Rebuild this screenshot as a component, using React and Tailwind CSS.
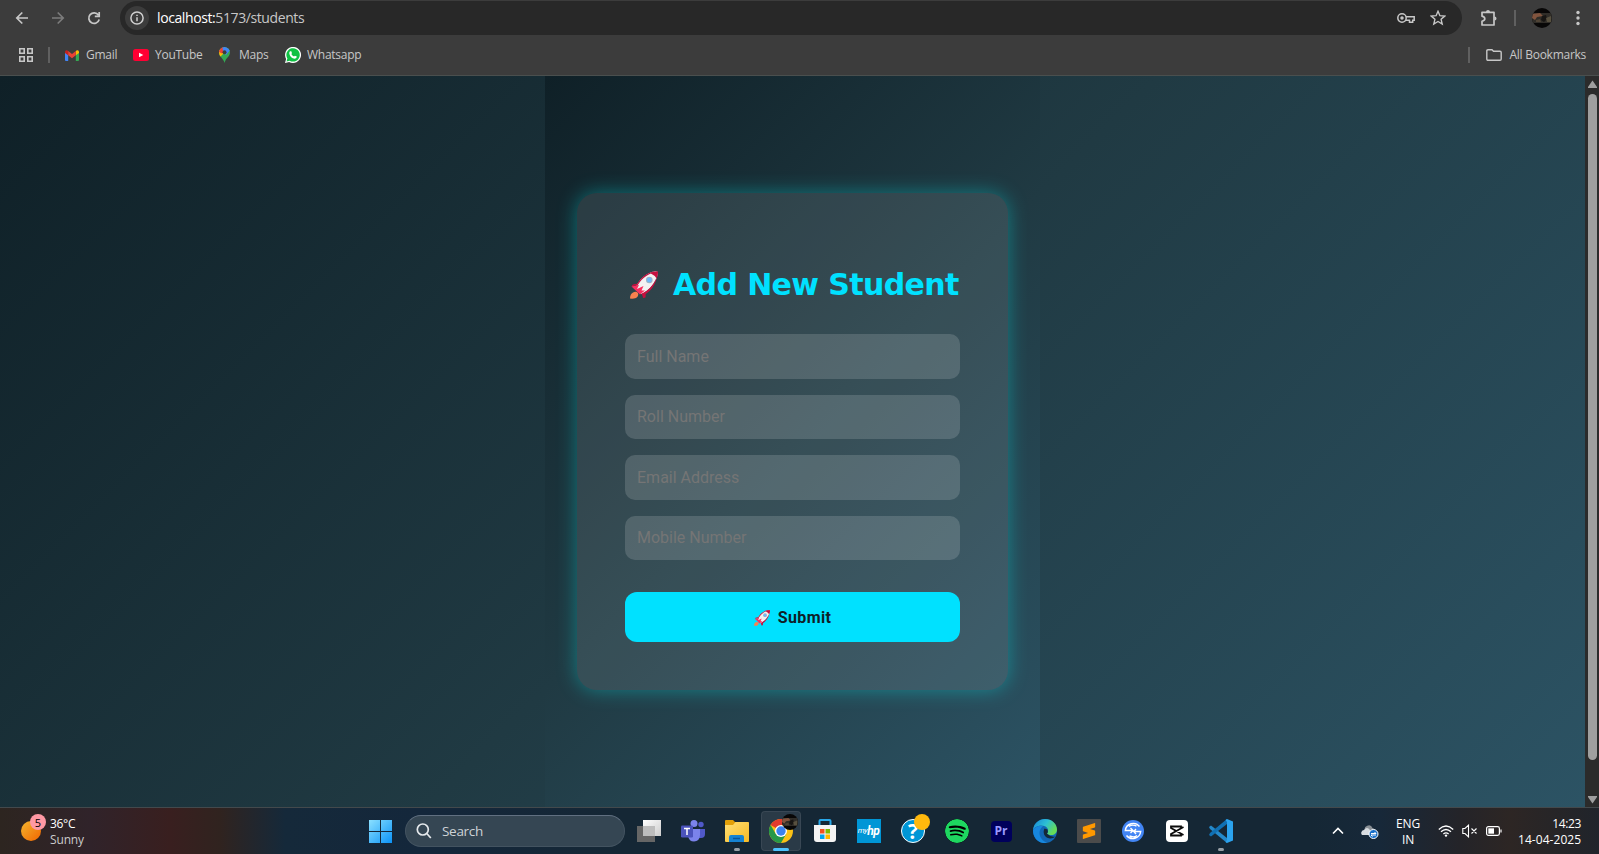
import React from "react";
import { SiSpotify, SiSublimetext } from "react-icons/si";

const BG = "bg-[linear-gradient(135deg,#0f2027,#203a43,#2c5364)]";

function Rocket({ className }) {
  return (
    <svg viewBox="0 0 28 28" className={className}>
      <path d="M3 21.500Q6 20 8 22Q9 25 6 27Q3 28 0 27.500Q0 23 3 21.500Z" fill="#f9814f" />
      <path d="M7 14L1.500 15.500Q2 13 5 13Q9 12 13 14L15 20Q16 24 15.500 26.500L13 27L12 22Z" fill="#c5103f" />
      <path d="M5 18C8 9 17 1 26 .3Q28 .2 27.800 2C27 11 19 20 11 23Z" fill="#f3f1f2" />
      <path d="M5 17.500C8 9 16 1.500 24 .5L24 1.500C17 3 10 9 6.500 16.500Z" fill="#c5103f" />
      <path d="M20.500 2.300Q23.500 .3 27 .2Q28.300 .4 28 2Q27.800 5 26.600 7.600Q25 4.500 20.500 2.300Z" fill="#c5103f" />
      <path d="M26.600 6.500C23 15 18 19.500 11.500 23L13 25C21 20 25.500 14 26.600 6.500Z" fill="#c5103f" />
      <path d="M1.500 15.500L9 14L7 18L13.500 15L11.500 19.500L15 19.500L10 23.500Z" fill="#f92f60" />
      <circle cx="19.300" cy="9" r="3.300" fill="#9ab4c8" />
      <circle cx="19.300" cy="9" r="2.200" fill="#6cb9fb" />
    </svg>
  );
}

function Gmail() {
  return (
    <svg viewBox="0 0 14 11" className="h-[11px] w-[14px]">
      <path d="M0 2V10Q0 11 1 11H3.200V4.500Z" fill="#4285f4" />
      <path d="M14 2V10Q14 11 13 11H10.800V4.500Z" fill="#34a853" />
      <path d="M0 2Q0 0 2 .3L3.200 1V5.300L0 3Z" fill="#c5221f" />
      <path d="M14 2Q14 0 12 .3L10.800 1V5.300L14 3Z" fill="#fbbc04" />
      <path d="M3.200 1L7 3.900L10.800 1V5.300L7 8.200L3.200 5.300Z" fill="#ea4335" />
    </svg>
  );
}

function MapsPin() {
  return (
    <svg viewBox="0 0 11 16" className="h-4 w-[11px]">
      <path d="M0 5.500A5.500 5.500 0 0 1 11 5.500C11 9.500 7 10.500 5.500 16C4.500 11 0 10 0 5.500Z" fill="#34a853" />
      <path d="M1.300 2L5.500 5.500L1.500 9.500Q0 7.500 0 5.500Q0 3.500 1.300 2Z" fill="#fbbc04" />
      <path d="M1.300 2Q2 .9 3.800 .3L6 3L3 6.500L0 5Q.2 3.200 1.300 2Z" fill="#ea4335" />
      <path d="M3.500 .4Q5.500 -.4 7.500 .4Q9.800 1.400 10.700 3.700L7 8L4 4Z" fill="#4285f4" />
      <circle cx="5.500" cy="5.300" r="2" fill="#3c3c3c" />
    </svg>
  );
}

function Bookmark({ icon, label, className = "" }) {
  return (
    <div className={"flex items-center text-[12px] tracking-[-0.270px] text-[#c7c7c7] " + className}>
      {icon}
      <span className="whitespace-nowrap">{label}</span>
    </div>
  );
}

function Avatar({ className }) {
  return (
    <svg viewBox="0 0 20 20" className={className}>
      <defs><clipPath id="face"><circle cx="10" cy="10" r="10" /></clipPath></defs>
      <g clipPath="url(#face)">
        <path d="M0 0H20V20H0Z" fill="#080707" />
        <path d="M0 5H20V15H0Z" fill="#302d28" />
        <path d="M0 6L8 5L11 8L5 9L3 12L0 10Z" fill="#81543e" />
        <path d="M10 8L14 7L15 11L12 14L9 12Z" fill="#171513" />
        <path d="M14 10L19 8V14H15Z" fill="#57503f" />
        <path d="M4 12L8 11L9 14H4Z" fill="#4f4335" />
      </g>
    </svg>
  );
}

function BrowserBar() {
  return (
    <header className="h-[76px] border-b border-[#4a4f4e] bg-[#3c3c3c]">
      <div className="flex h-9 items-center">
        <svg viewBox="0 0 120 36" className="h-9 w-[120px]" fill="none" stroke="#c7c7c7" strokeWidth="1.700">
          <path d="M28 18H17M22.300 12.500L16.800 18L22.300 23.500" />
          <path d="M52 18H63M57.700 12.500L63.200 18L57.700 23.500" stroke="#7c7c7c" />
          <path d="M98.400 15A5.300 5.300 0 1 0 99.200 19.500M99.200 12V16.400H94.800" />
        </svg>
        <div className="mb-[1px] flex h-[34px] w-[1342px] items-center rounded-full bg-[#282828] pl-[5px] pr-4">
          <div className="flex size-6 items-center justify-center rounded-full bg-[#3c3c3c]">
            <svg viewBox="0 0 14 14" className="size-[14px]" fill="none" stroke="#d0d0d0" strokeWidth="1.500">
              <circle cx="7" cy="7" r="6.100" /><path d="M7 6.200V10.200M7 3.700V5.100" />
            </svg>
          </div>
          <span className="ml-2 text-[14px] tracking-[-0.400px] text-[#c7c7c7]"><span className="text-white">localhost:</span>5173/students</span>
          <svg viewBox="0 0 18 12" className="ml-auto h-3 w-[18px]" fill="none" stroke="#c7c7c7" strokeWidth="1.500">
            <circle cx="5" cy="6" r="4.200" /><circle cx="5" cy="6" r="1" fill="#c7c7c7" />
            <path d="M9 4.700H17.200V8.200H15.700V10.200H12.500V8.200H9" />
          </svg>
          <svg viewBox="0 0 16 16" className="ml-[15px] size-4" fill="none" stroke="#c7c7c7" strokeWidth="1.400">
            <path d="M8 1.300L9.900 5.700L14.700 6.100L11.100 9.300L12.200 14L8 11.500L3.800 14L4.900 9.300L1.300 6.100L6.100 5.700Z" />
          </svg>
        </div>
        <svg viewBox="0 0 18 18" className="mb-[1px] ml-[18px] size-[18px]" fill="none" stroke="#c7c7c7" strokeWidth="1.700">
          <path d="M2 3.300H14V16H2V12.200Q4.800 11.500 4.800 9.700Q4.800 7.800 2 7.200Z" strokeLinejoin="round" />
          <path d="M6 3A2 2 0 0 1 10 3ZM14.500 7.500A2 2 0 0 1 14.500 11.500Z" fill="#c7c7c7" stroke="none" />
        </svg>
        <div className="ml-[15.500px] h-4 w-[2px] bg-[#606060]" />
        <Avatar className="ml-[16px] size-5" />
        <svg viewBox="0 0 4 16" className="ml-[24px] h-4 w-1" fill="#c7c7c7">
          <circle cx="2" cy="2.500" r="1.700" /><circle cx="2" cy="8" r="1.700" /><circle cx="2" cy="13.500" r="1.700" />
        </svg>
      </div>
      <div className="flex h-[38px] items-center pl-[19px] pr-[13px]">
        <svg viewBox="0 0 14 14" className="size-[14px]" fill="none" stroke="#c7c7c7" strokeWidth="1.600">
          <path d="M.8 .8H5.200V5.200H.8ZM8.800 .8H13.200V5.200H8.800ZM.8 8.800H5.200V13.200H.8ZM8.800 8.800H13.200V13.200H8.800Z" />
        </svg>
        <div className="ml-[15px] h-4 w-[2px] bg-[#606060]" />
        <Bookmark className="ml-[15px] w-[68px] gap-[7px]" icon={<Gmail />} label="Gmail" />
        <Bookmark className="w-[86px] gap-[6px]" label="YouTube" icon={
          <svg viewBox="0 0 16 12" className="h-3 w-4"><rect width="16" height="12" rx="2.500" fill="#ff0033" /><path d="M6 3.700V8.300L10.300 6Z" fill="#fff" /></svg>
        } />
        <Bookmark className="w-[66px] gap-[9px]" icon={<MapsPin />} label="Maps" />
        <Bookmark className="gap-[6px]" label="Whatsapp" icon={
          <svg viewBox="0 0 16 16" className="size-4"><path d="M0 16L1.100 11.900A8 8 0 1 1 4.100 14.900Z" fill="#fff" /><path d="M1.500 14.500L2.400 11.500A6.700 6.700 0 1 1 4.700 13.700Z" fill="#0fc143" /><path d="M5 4.200H6.300L7 6.200L6.300 7.100Q7.200 8.800 9 9.500L9.900 8.700L11.800 9.600Q11.800 11.700 9.800 11.700Q5.400 11 4.300 6.700Q4.100 5 5 4.200Z" fill="#fff" /></svg>
        } />
        <div className="ml-auto h-4 w-[2px] bg-[#606060]" />
        <Bookmark className="ml-4 gap-2" label="All Bookmarks" icon={
          <svg viewBox="0 0 16 12" className="h-3 w-4" fill="none" stroke="#c7c7c7" strokeWidth="1.400"><path d="M2 .8H6L7.500 2.300H14Q15.200 2.300 15.200 3.500V10Q15.200 11.200 14 11.200H2Q.8 11.200 .8 10V2Q.8 .8 2 .8Z" /></svg>
        } />
      </div>
    </header>
  );
}

function StudentForm() {
  return (
    <main className={"flex flex-1 justify-center " + BG}>
      <section className={"flex w-[495px] items-center justify-center font-[Roboto,sans-serif] " + BG}>
        <form className="h-[497px] w-[431px] rounded-[20px] bg-[#ffffff1a] px-12 pt-[74px] shadow-[0_0_20px_#00ffff59]">
          <h2 className="flex h-9 items-center whitespace-nowrap pl-[5px]">
            <Rocket className="size-7 shrink-0" />
            <span className="ml-[15px] font-['DejaVu_Sans',sans-serif] text-[30px] font-bold leading-none tracking-[-0.620px] text-[#00e1ff]">Add New Student</span>
          </h2>
          <div className="mt-[31px] flex flex-col gap-4">
            {["Full Name", "Roll Number", "Email Address", "Mobile Number"].map((label) => (
              <input key={label} placeholder={label} className="h-[44.500px] w-full rounded-[10px] bg-[#ffffff26] px-3 text-[16px] placeholder:text-[#757575]" />
            ))}
          </div>
          <button type="button" className="mt-8 flex h-[50px] w-full items-center justify-center gap-2 rounded-xl bg-[#00e1ff] pt-[1px] text-[16px] font-bold tracking-[0.400px] text-[#0f2027]">
            <Rocket className="size-4" />
            Submit
          </button>
        </form>
      </section>
    </main>
  );
}

function Scrollbar() {
  return (
    <aside className="flex w-[14px] flex-col items-center bg-[#2b2b2b] pb-[3px] pt-1">
      <svg viewBox="0 0 9 8" className="h-2 w-[9px]" fill="#9f9f9f"><path d="M4.500 .5L9 7V8H0V7Z" /></svg>
      <div className="mb-auto mt-[6px] h-[666px] w-[9px] rounded-full bg-[#9f9f9f]" />
      <svg viewBox="0 0 9 8" className="h-2 w-[9px]" fill="#9f9f9f"><path d="M4.500 7.500L9 1V0H0V1Z" /></svg>
    </aside>
  );
}

function Teams() {
  return (
    <svg viewBox="0 0 24 22" className="h-[22px] w-6">
      <circle cx="20" cy="4.500" r="2.700" fill="#5059c9" /><path d="M17 9H24V14Q24 18 20 18H17Z" fill="#5059c9" />
      <circle cx="13" cy="3.600" r="3.500" fill="#7b83eb" /><path d="M7 9H19V15Q18.500 21.500 13 21.500Q8 21.500 7 16Z" fill="#7b83eb" />
      <rect y="5.500" width="12" height="12" rx="1.300" fill="#4b53bc" /><path d="M3 8.500H9M6 8.500V15" stroke="#fff" strokeWidth="1.500" />
    </svg>
  );
}

function Folder() {
  return (
    <svg viewBox="0 0 24 22" className="h-[22px] w-6">
      <defs><linearGradient id="folder" x2="1" y2="1"><stop stopColor="#ffdf75" /><stop offset="1" stopColor="#f9bb24" /></linearGradient></defs>
      <path d="M0 1Q0 0 1 0H8L10 2H22Q24 2 24 4V10H0Z" fill="#e3a008" />
      <path d="M0 5H8L10.500 2H23Q24 2 24 3V21Q24 22 23 22H1Q0 22 0 21Z" fill="url(#folder)" />
      <path d="M4 22V17Q4 15 6 15H17Q19 15 19 17V22Z" fill="#1683d3" /><path d="M8 18.500H15" stroke="#0a559b" strokeWidth="1.500" />
    </svg>
  );
}

function Chrome() {
  return (
    <svg viewBox="0 0 24 24" className="size-6">
      <circle cx="12" cy="12" r="12" fill="#fbc116" />
      <path d="M12 12L1.600 6A12 12 0 0 1 22.400 6H12Z" fill="#e33b2e" />
      <path d="M1.600 6A12 12 0 0 0 12 24L17.200 15L12 12L6.800 15Z" fill="#279847" />
      <circle cx="12" cy="12" r="6" fill="#fff" /><circle cx="12" cy="12" r="4.700" fill="#3b82f0" />
    </svg>
  );
}

function Store() {
  return (
    <svg viewBox="0 0 24 24" className="size-6">
      <path d="M6.500 7V2Q6.500 1 7.500 1H16.500Q17.500 1 17.500 2V7" fill="none" stroke="#28a8e9" strokeWidth="2" />
      <path d="M1 6H23V20Q23 23 20 23H4Q1 23 1 20Z" fill="#f4f4f4" />
      <path d="M7 10H11.500V14.500H7Z" fill="#f25022" /><path d="M12.500 10H17V14.500H12.500Z" fill="#7fba00" />
      <path d="M7 15.500H11.500V20H7Z" fill="#00a4ef" /><path d="M12.500 15.500H17V20H12.500Z" fill="#ffb900" />
    </svg>
  );
}

function Edge() {
  return (
    <svg viewBox="0 0 24 24" className="size-6">
      <defs><linearGradient id="wave" x2="1" y2=".5"><stop stopColor="#1683d8" /><stop offset=".55" stopColor="#2dc0d4" /><stop offset="1" stopColor="#66dc57" /></linearGradient></defs>
      <circle cx="12" cy="12" r="12" fill="#1267b4" />
      <path d="M0 11C1 4 6 0 12 0C19 0 24 5 24 10.500C24 14 21.500 16 18.500 16C16 16 14 15.300 14 14.500C15.500 13 16 9 12 7.200C7 5 1 8 0 11Z" fill="url(#wave)" />
      <path d="M0 11C2 8 6 6 10 7.500C7 9 5 14 8 19C10 22 13 24 15 23.600C6 26 0 19 0 11Z" fill="#1787de" />
      <path d="M11.500 9.500C9.500 13 11 19 17 19.500Q20 19.700 22.600 17.500Q18 18.500 14 14.700Q15.500 13 14.500 10.500Z" fill="#142838" />
    </svg>
  );
}

function Sync() {
  return (
    <svg viewBox="0 0 22 22" className="size-[22px]" fill="none" stroke="#fff" strokeWidth="1.400">
      <circle cx="11" cy="11" r="11" fill="#4285f4" stroke="none" />
      <path d="M17.500 6.500A8 8 0 0 0 3.300 10.500H10.500M8.500 8L11 10.500L8.500 13M4.500 15.500A8 8 0 0 0 18.700 11.500H12M14 9L11.800 11.500L14 14M7 6.500Q10 4 14.500 6M7.500 16Q12 18 15 15.500" />
    </svg>
  );
}

function CapCut() {
  return (
    <svg viewBox="0 0 22 22" className="size-[22px]" fill="none" stroke="#0b0b0b" strokeWidth="1.800">
      <rect width="22" height="22" rx="4" fill="#fff" stroke="none" />
      <path d="M17.500 7L5 14V15.500H15V14M17.500 15L5 8V6.500H15V8" />
    </svg>
  );
}

function VSCode() {
  return (
    <svg viewBox="0 0 24 24" className="size-6">
      <path d="M0 8L2 6.500L18 19V24L1 10Z" fill="#2489ca" />
      <path d="M0 16L2 17.500L18 5V0L1 14Z" fill="#1070b3" />
      <path d="M18 0L24 2.500V21.500L18 24L16.500 23L18 21V3L16.500 1Z" fill="#2ba3ee" />
    </svg>
  );
}

function MyHp() {
  return <div className="flex size-6 items-center justify-center bg-[#0096d6] pr-[1px] font-[Roboto,sans-serif] text-[8px] italic leading-none tracking-[-0.500px] text-white">my<span className="text-[12px] font-bold">hp</span></div>;
}

function Help() {
  return (
    <div className="relative flex size-6 items-center justify-center rounded-full border-[1.500px] border-white bg-[#0096d6] text-[21px] font-bold leading-none text-white">
      ?
      <span className="absolute -right-[6px] -top-[6px] size-4 rounded-full bg-[#ffb90d]" />
    </div>
  );
}

function TaskView() {
  return (
    <svg viewBox="0 0 24 22" className="h-[22px] w-6">
      <defs><linearGradient id="pane" x2="1" y2="1"><stop stopColor="#fff" /><stop offset="1" stopColor="#ccc" /></linearGradient></defs>
      <path d="M6 0H24V16H6Z" fill="url(#pane)" /><path d="M0 6H18V22H0Z" fill="#666" /><path d="M6 6H18V16H6Z" fill="#bdbdbd" />
    </svg>
  );
}

function Slot({ children, mark, active }) {
  return (
    <div className={"relative flex h-10 w-10 shrink-0 items-center justify-center rounded " + (active ? "bg-[#ffffff17] ring-1 ring-inset ring-[#ffffff12]" : "")}>
      {children}
      {mark && <span className={"absolute rounded-full " + (active ? "bottom-0 h-[3px] w-4 bg-[#4cc2ff]" : "bottom-0 h-[3px] w-[6px] bg-[#98a0a7]")} />}
    </div>
  );
}

function Taskbar() {
  return (
    <footer className="flex h-[47px] items-center border-t border-[#43494c] bg-[linear-gradient(90deg,#2d2520_0px,#30232a_90px,#391f1f_170px,#30231f_220px,#15293a_285px,#14273b_420px,#152735_620px,#152735_1310px,#172839_1380px,#242429_1460px,#2d2624_1510px,#20242b_1599px)] text-white">
      <div className="relative ml-[21px] h-5 w-5">
        <div className="size-5 rounded-full bg-[linear-gradient(135deg,#f3b62f,#f26500)]" />
        <span className="absolute -right-[5px] -top-[7px] flex size-4 items-center justify-center rounded-full bg-[#ff99a4] text-[11px] leading-none text-black">5</span>
      </div>
      <div className="ml-[9px] w-[307px] pt-[1px] text-[12px] leading-4">
        <div className="tracking-[-0.300px]">36°C</div>
        <div className="tracking-[-0.150px] text-[#cbcbcb]">Sunny</div>
      </div>
      <svg viewBox="0 0 23 23" className="ml-[11.500px] size-[23px]">
        <defs><linearGradient id="win" x2="1" y2="1"><stop stopColor="#8be0ff" /><stop offset="1" stopColor="#0b93f8" /></linearGradient></defs>
        <path d="M0 0H11V11H0ZM12 0H23V11H12ZM0 12H11V23H0ZM12 12H23V23H12Z" fill="url(#win)" />
      </svg>
      <div className="ml-[13.500px] flex h-8 w-[220px] items-center rounded-full border border-[#435360] border-t-[#617081] bg-[#354653] pl-[10px]">
        <svg viewBox="0 0 16 16" className="size-4" fill="none" stroke="#e5e9ec" strokeWidth="1.700"><circle cx="6.800" cy="6.500" r="5.500" /><path d="M10.800 10.500L14.800 15" /></svg>
        <span className="ml-[10px] text-[13.500px] tracking-[-0.300px] text-[#cdd2d6]">Search</span>
      </div>
      <div className="ml-1 flex gap-1">
        <Slot><TaskView /></Slot>
        <Slot><Teams /></Slot>
        <Slot mark><Folder /></Slot>
        <Slot mark active>
          <Chrome />
          <Avatar className="absolute right-[3px] top-[3px] size-4" />
        </Slot>
        <Slot><Store /></Slot>
        <Slot><MyHp /></Slot>
        <Slot><Help /></Slot>
        <Slot><SiSpotify className="size-6 rounded-full bg-black text-[#1ed760]" /></Slot>
        <Slot><div className="flex h-[21px] w-[21px] items-center justify-center rounded bg-[#00005b] text-[12px] font-bold leading-none text-[#9999ff]">Pr</div></Slot>
        <Slot><Edge /></Slot>
        <Slot><div className="flex size-6 items-center justify-center rounded-[1px] bg-[#4b4b4b]"><SiSublimetext className="size-4 text-[#ff9800]" /></div></Slot>
        <Slot><Sync /></Slot>
        <Slot><CapCut /></Slot>
        <Slot mark><VSCode /></Slot>
      </div>
      <div className="ml-auto flex items-center pr-[18px]">
        <svg viewBox="0 0 12 8" className="h-2 w-3" fill="none" stroke="#fff" strokeWidth="1.600"><path d="M1 6.500L6 1.500L11 6.500" /></svg>
        <svg viewBox="0 0 18 14" className="ml-[17px] mt-[2px] h-[14px] w-[18px]">
          <path d="M4 6A4 4 0 0 1 11.500 3Q15 4 14 10H4Z" fill="#8a9096" /><path d="M1 10A3 3 0 0 1 3 5Q6 1 9 5L12 10Z" fill="#d8dce0" />
          <circle cx="12.500" cy="9" r="4.500" fill="#176fca" stroke="#fff" /><path d="M10 8.500H15L13.500 7M15 10H10L11.500 11.500" fill="none" stroke="#fff" />
        </svg>
        <div className="ml-4 mt-[2px] w-[26px] text-center text-[12px] leading-4 tracking-[-0.200px]">ENG<br />IN</div>
        <svg viewBox="0 0 16 12" className="ml-[17px] h-3 w-4" fill="none" stroke="#fff" strokeWidth="1.300"><path d="M.8 4.500Q8 -2.500 15.200 4.500M3 6.800Q8 2.200 13 6.800M5.400 9Q8 6.800 10.600 9" /><circle cx="8" cy="10.600" r="1.200" fill="#fff" stroke="none" /></svg>
        <svg viewBox="0 0 16 14" className="ml-2 h-[14px] w-4" fill="none" stroke="#fff" strokeWidth="1.100"><path d="M.8 4.500H3L6.500 1.200V12.800L3 9.500H.8ZM9.500 4.500L14.500 9.500M14.500 4.500L9.500 9.500" /></svg>
        <svg viewBox="0 0 16 10" className="ml-2 h-[10px] w-4" fill="none" stroke="#fff" strokeWidth="1.200"><rect x=".6" y=".6" width="12.800" height="8.800" rx="1.800" /><path d="M15 3.500V6.500" /><path d="M2.300 2.300H8V7.700H2.300Z" fill="#fff" stroke="none" /></svg>
        <div className="ml-4 w-[63px] pt-[1px] text-right text-[12px] leading-4"><span className="tracking-[-0.350px]">14:23</span><br /><span className="whitespace-nowrap tracking-[0.050px]">14-04-2025</span></div>
      </div>
    </footer>
  );
}

export default function App() {
  return (
    <div className="flex h-screen w-full flex-col overflow-hidden font-['Open_Sans',sans-serif]">
      <BrowserBar />
      <div className="flex min-h-0 flex-1">
        <StudentForm />
        <Scrollbar />
      </div>
      <Taskbar />
    </div>
  );
}
